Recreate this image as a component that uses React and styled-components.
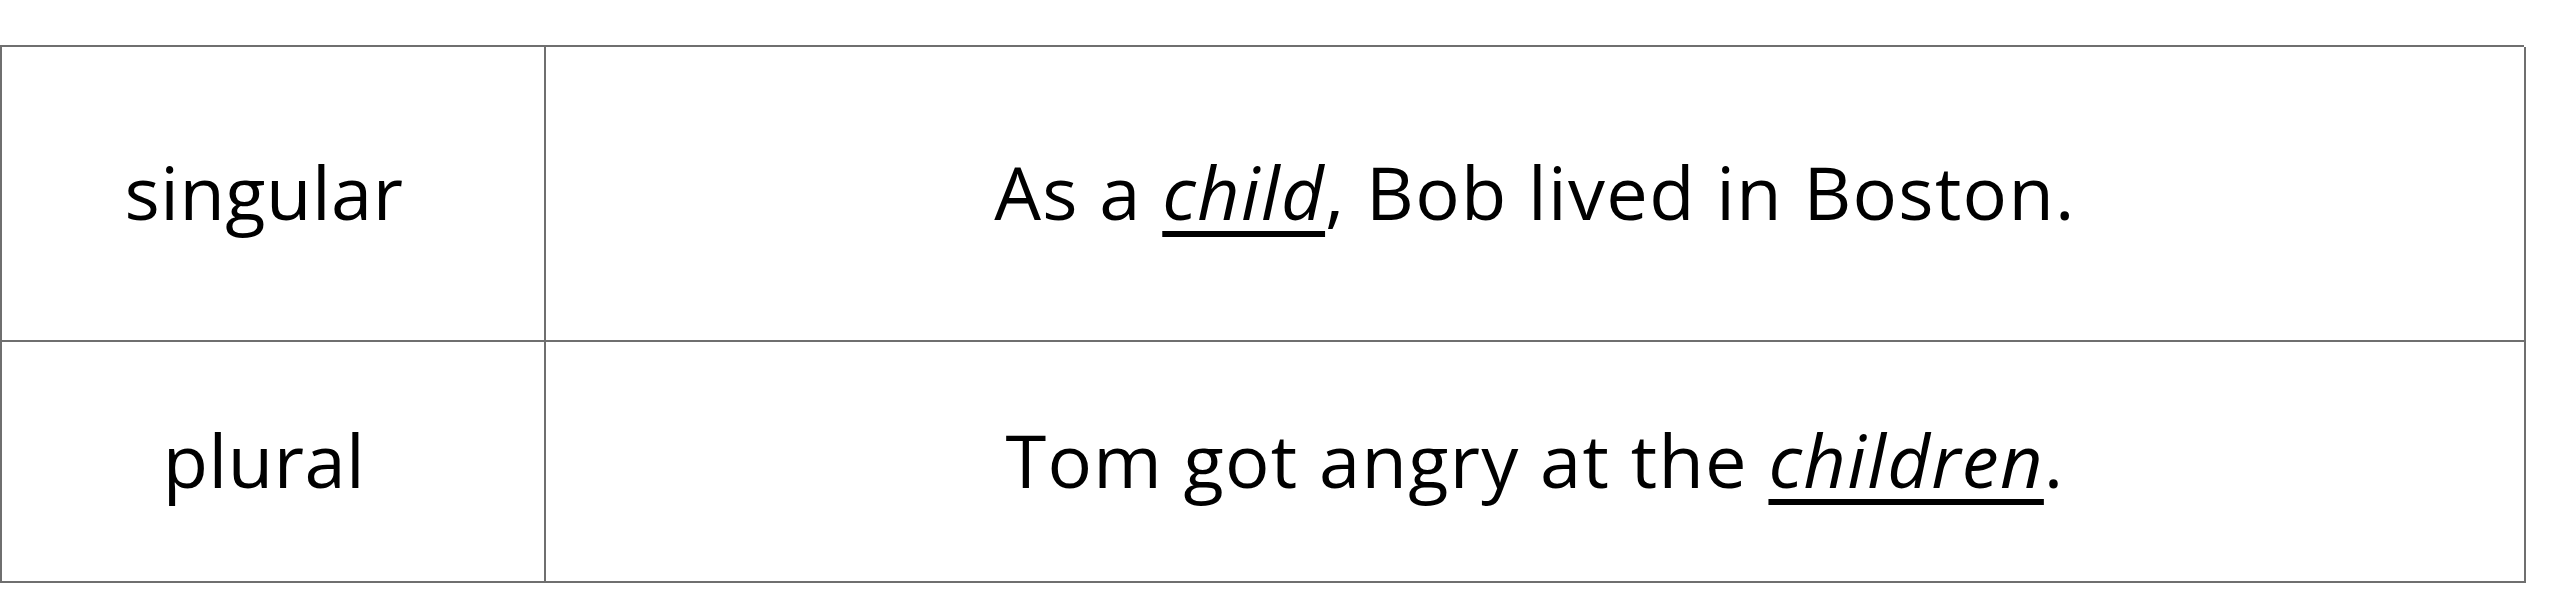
import React from "react";
import styled, { createGlobalStyle } from "styled-components";

const Global = createGlobalStyle`
  html, body { margin: 0; padding: 0; background: #ffffff; }
  body { font-family: "Open Sans", "Noto Sans", sans-serif; color: #000; }
`;

const Page = styled.div`
  padding-top: 45px;
  width: 2560px;
  height: 603px;
  box-sizing: border-box;
`;

const Table = styled.div`
  display: grid;
  grid-template-columns: 544px 1980px;
  grid-template-rows: 295px 241px;
  border-top: 2px solid #6f6f6f;
  border-left: 2px solid #6f6f6f;
  width: 2524px;
  box-sizing: border-box;
`;

const Cell = styled.div`
  display: flex;
  align-items: center;
  justify-content: center;
  border-right: 2px solid #6f6f6f;
  border-bottom: 2px solid #6f6f6f;
  font-size: 74px;
  line-height: 1.36;
  padding-bottom: 3px;
  padding-right: ${(p) => (p.$label ? "18px" : "0")};
  box-sizing: border-box;
  white-space: nowrap;
  letter-spacing: ${(p) => (p.$label ? "0.5px" : "1.3px")};
`;

const Text = styled.span`
  display: inline-block;
`;

const Em = styled.span`
  font-style: italic;
  text-decoration: underline;
  text-decoration-thickness: 6px;
  text-underline-offset: 11px;
  text-decoration-skip-ink: none;
`;

const rows = [
  {
    label: "singular",
    sentence: (
      <>
        As a <Em>child</Em>, Bob lived in Boston.
      </>
    ),
  },
  {
    label: "plural",
    sentence: (
      <>
        Tom got angry at the <Em>children</Em>.
      </>
    ),
  },
];

export default function App() {
  return (
    <Page>
      <Global />
      <Table>
        {rows.map((r) => (
          <React.Fragment key={r.label}>
            <Cell $label>
              <Text>{r.label}</Text>
            </Cell>
            <Cell>
              <Text>{r.sentence}</Text>
            </Cell>
          </React.Fragment>
        ))}
      </Table>
    </Page>
  );
}
